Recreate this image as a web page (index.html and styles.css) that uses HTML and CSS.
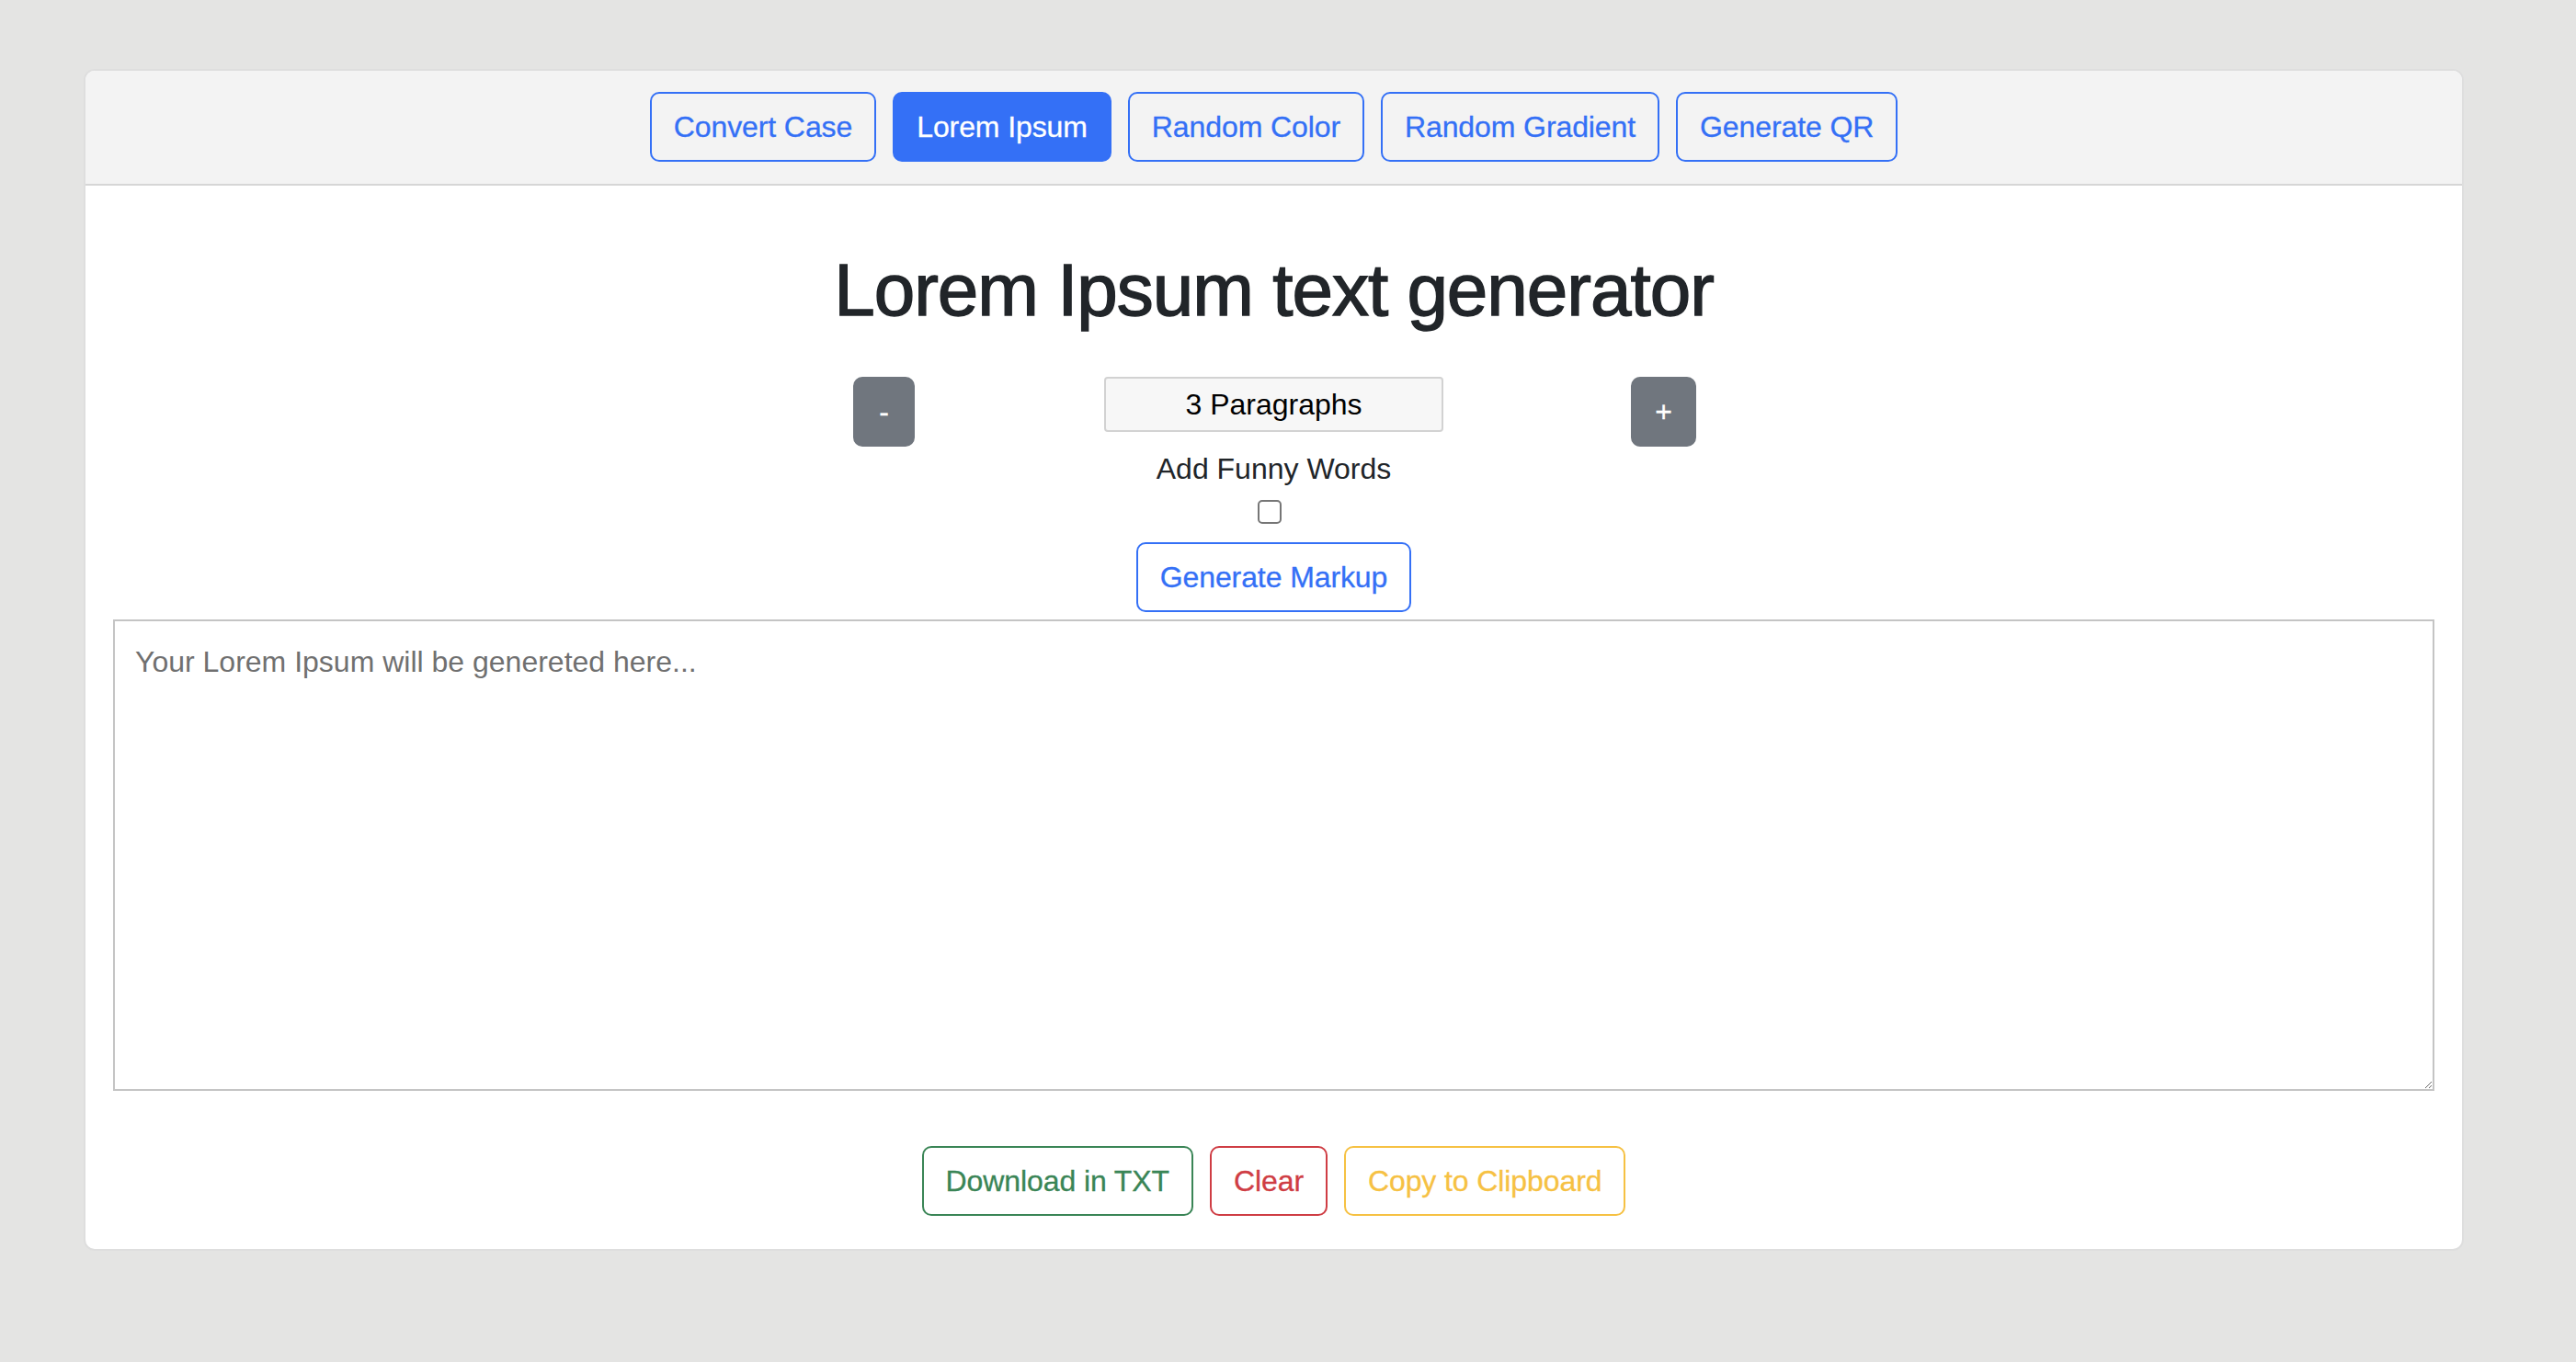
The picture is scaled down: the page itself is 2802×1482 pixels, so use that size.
FILE: index.html
```html
<!DOCTYPE html>
<html lang="en">
<head>
<meta charset="utf-8">
<title>Lorem Ipsum text generator</title>
<link rel="stylesheet" href="styles.css">
</head>
<body>
<div class="page">
  <div class="card">
    <div class="card-header">
      <button class="btn btn-outline-primary">Convert Case</button>
      <button class="btn btn-primary">Lorem Ipsum</button>
      <button class="btn btn-outline-primary">Random Color</button>
      <button class="btn btn-outline-primary">Random Gradient</button>
      <button class="btn btn-outline-primary">Generate QR</button>
    </div>
    <div class="card-body">
      <h1 class="title">Lorem Ipsum text generator</h1>
      <div class="stepper">
        <button class="btn btn-secondary btn-minus">-</button>
        <input class="count" type="text" value="3 Paragraphs" readonly>
        <button class="btn btn-secondary btn-plus">+</button>
      </div>
      <div class="funny-label">Add Funny Words</div>
      <div class="check-row"><input type="checkbox" class="check"></div>
      <div class="center-row">
        <button class="btn btn-outline-primary">Generate Markup</button>
      </div>
      <textarea class="output" placeholder="Your Lorem Ipsum will be genereted here..."></textarea>
      <div class="actions">
        <button class="btn btn-outline-success">Download in TXT</button>
        <button class="btn btn-outline-danger">Clear</button>
        <button class="btn btn-outline-warning">Copy to Clipboard</button>
      </div>
    </div>
  </div>
</div>
</body>
</html>
```

FILE: styles.css
```css
* { box-sizing: border-box; }

html, body {
  margin: 0;
  padding: 0;
  background: #e4e4e3;
  font-family: "Liberation Sans", Arial, sans-serif;
  color: #23262a;
}

.page {
  padding: 75px 122px 0 91px;
}

.card {
  background: #ffffff;
  border: 2px solid #dedede;
  border-radius: 12px;
  overflow: hidden;
}

.card-header {
  background: #f3f3f3;
  border-bottom: 2px solid #d6d6d6;
  padding: 23px 30px 24px;
  display: flex;
  justify-content: center;
  gap: 18px;
}

.btn {
  font-family: "Liberation Sans", Arial, sans-serif;
  font-size: 32px;
  line-height: 48px;
  padding: 12px 24px;
  border: 2px solid transparent;
  border-radius: 10px;
  background: transparent;
  cursor: pointer;
  letter-spacing: -0.1px;
  -webkit-text-stroke: 0.3px currentColor;
}

.btn-outline-primary { color: #3470f6; border-color: #3470f6; }
.btn-primary { color: #ffffff; background: #3470f6; border-color: #3470f6; }
.btn-secondary { color: #ffffff; background: #70767e; border-color: #70767e; }
.btn-outline-success { color: #3a8556; border-color: #3a8556; }
.btn-outline-danger { color: #cf3d44; border-color: #cf3d44; }
.btn-outline-warning { color: #f6c143; border-color: #f6c143; }

.card-body {
  padding: 30px 30px 36px;
}

.title {
  margin: 36px 0 46px;
  font-size: 80px;
  line-height: 96px;
  font-weight: 500;
  text-align: center;
  letter-spacing: -1px;
  color: #212529;
  -webkit-text-stroke: 1.4px #212529;
}

.stepper {
  display: grid;
  grid-template-columns: repeat(3, 424px);
  justify-content: center;
  justify-items: center;
  align-items: start;
}

.btn-minus { width: 67px; padding: 12px 0; }
.btn-plus { width: 71px; padding: 12px 0; }

.count {
  width: 369px;
  height: 60px;
  font-family: "Liberation Sans", Arial, sans-serif;
  font-size: 32px;
  text-align: center;
  color: #000000;
  background: #f7f7f7;
  border: 2px solid #d2d2d2;
  border-radius: 4px;
  padding: 0 12px;
  outline: none;
}

.funny-label {
  text-align: center;
  font-size: 32px;
  line-height: 48px;
  color: #212529;
}

.check-row {
  display: flex;
  justify-content: center;
  padding-right: 9px;
  margin-top: 10px;
}

.check {
  appearance: none;
  -webkit-appearance: none;
  width: 26px;
  height: 26px;
  margin: 0;
  border: 2px solid #767676;
  border-radius: 5px;
  background: #ffffff;
}

.center-row {
  display: flex;
  justify-content: center;
  margin-top: 20px;
}

.output {
  display: block;
  width: 100%;
  height: 513px;
  margin-top: 8px;
  border: 2px solid #c4c4c4;
  border-radius: 0;
  padding: 20px 22px 19px;
  font-family: "Liberation Sans", Arial, sans-serif;
  font-size: 32px;
  line-height: 48px;
  color: #212529;
  resize: vertical;
  outline: none;
}

.output::placeholder {
  color: #707070;
}

.actions {
  display: flex;
  justify-content: center;
  gap: 18px;
  margin-top: 60px;
}
```
